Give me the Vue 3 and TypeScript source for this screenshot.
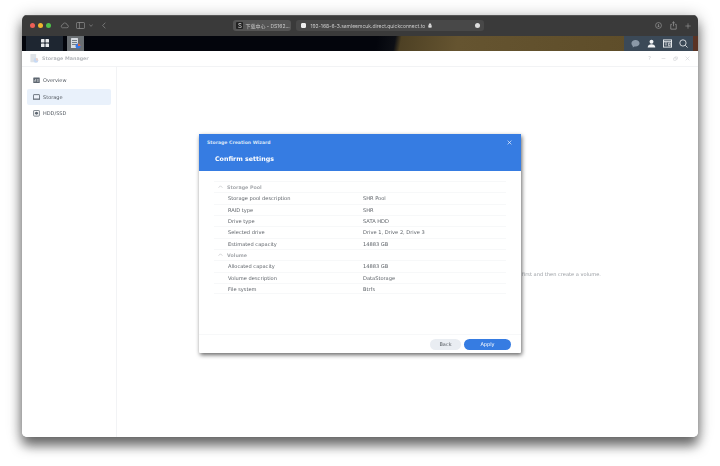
<script setup lang="ts">
const sideItems = [
  { label: 'Overview', active: false, kind: 'overview' },
  { label: 'Storage', active: true, kind: 'storage' },
  { label: 'HDD/SSD', active: false, kind: 'hdd' },
]
const sections = [
  {
    title: 'Storage Pool',
    rows: [
      ['Storage pool description', 'SHR Pool'],
      ['RAID type', 'SHR'],
      ['Drive type', 'SATA HDD'],
      ['Selected drive', 'Drive 1, Drive 2, Drive 3'],
      ['Estimated capacity', '14883 GB'],
    ],
  },
  {
    title: 'Volume',
    rows: [
      ['Allocated capacity', '14883 GB'],
      ['Volume description', 'DataStorage'],
      ['File system', 'Btrfs'],
    ],
  },
]
</script>

<template>
  <div class="page">
    <div class="window">
      <header class="toolbar">
        <div class="lights">
          <i class="light red"></i><i class="light yellow"></i><i class="light green"></i>
        </div>
        <svg class="tool cloud" viewBox="0 0 14 10"><path d="M3.5 8.5h7.2a2.2 2.2 0 0 0 .3-4.4A3.6 3.6 0 0 0 7.4 1a3.6 3.6 0 0 0-3.3 3A2.3 2.3 0 0 0 3.5 8.500z" /></svg>
        <svg class="tool sidebar" viewBox="0 0 12 9"><rect x=".5" y=".5" width="11" height="8" rx="1.5" /><path d="M4.500 .5v8" /></svg>
        <svg class="tool caret" viewBox="0 0 6 4"><path d="M.5 .8 3 3.200 5.500 .8" /></svg>
        <svg class="tool back" viewBox="0 0 6 10"><path d="M5 .8 1 5l4 4.200" /></svg>
        <div class="tabs">
          <div class="tab first">
            <span class="favicon">S</span>
            <span class="tab-text">下载中心 - DS162...</span>
          </div>
          <div class="tab second">
            <span class="favicon2"></span>
            <span class="tab-text">192-168-6-3.samleemcuk.direct.quickconnect.to</span>
            <svg class="lock" viewBox="0 0 6 7"><path d="M1.500 3V2a1.500 1.500 0 0 1 3 0v1" /><rect x=".7" y="3" width="4.600" height="3.500" rx=".6" /></svg>
            <span class="more"></span>
          </div>
        </div>
        <div class="right-tools">
          <svg class="tool dl" viewBox="0 0 10 10"><circle cx="5" cy="5" r="4.200" /><path d="M5 2.800v4M3.400 5.400 5 7l1.600-1.600" /></svg>
          <svg class="tool share" viewBox="0 0 9 11"><path d="M2.500 4H1v6.200h7V4H6.500M4.500 6.500V.8M2.800 2.400 4.500 .8l1.700 1.600" /></svg>
          <svg class="tool plus" viewBox="0 0 9 9"><path d="M4.500 .5v8M.5 4.500h8" /></svg>
        </div>
      </header>

      <nav class="taskbar">
        <div class="task-left">
          <span class="grid-btn">
            <svg viewBox="0 0 8 8"><rect x="0" y="0" width="3.500" height="3.500" rx=".6" /><rect x="4.500" y="0" width="3.500" height="3.500" rx=".6" /><rect x="0" y="4.500" width="3.500" height="3.500" rx=".6" /><rect x="4.500" y="4.500" width="3.500" height="3.500" rx=".6" /></svg>
          </span>
          <span class="app-btn">
            <svg viewBox="0 0 10 11"><rect x="0" y="0" width="7" height="10" rx=".6" fill="#d7dbe0" /><path d="M1 2.500h5M1 4.500h5M1 6.500h5" stroke="#59636e" stroke-width=".8" /><circle cx="7" cy="8" r="2.500" fill="#3578e5" /><path d="M7 8h2.500A2.500 2.500 0 0 0 7 5.500z" fill="#e0683a" /></svg>
          </span>
        </div>
        <div class="task-right">
          <svg viewBox="0 0 10 10" class="t-chat"><path d="M5 1c2.600 0 4.500 1.500 4.500 3.600S7.600 8.200 5 8.200H3.800L2 9.500V7.700C1 7 .5 5.800 .5 4.600.5 2.500 2.400 1 5 1z" /></svg>
          <svg viewBox="0 0 10 10" class="t-user"><circle cx="5" cy="3" r="2.200" /><path d="M.8 9.500c0-2.600 2-3.600 4.200-3.600s4.200 1 4.200 3.600z" /></svg>
          <svg viewBox="0 0 10 10" class="t-widget"><rect x=".5" y="1" width="9" height="8" fill="none" stroke="#f1f3f5" /><path d="M.5 3h9" stroke="#f1f3f5" stroke-width="1.200" /><path d="M2 4.500h2.500M6 4.500h2v3H6zM2 6.500h2.500" stroke="#f1f3f5" fill="none" stroke-width=".8" /></svg>
          <svg viewBox="0 0 10 10" class="t-search"><circle cx="4.400" cy="4.400" r="3.500" /><path d="m7 7 2.500 2.500" /></svg>
        </div>
      </nav>

      <section class="app">
        <div class="titlebar">
          <svg class="app-icon" viewBox="0 0 10 11"><rect x="0" y="0" width="7" height="10" rx=".6" fill="#dfe3e7" /><circle cx="6.800" cy="7.800" r="2.800" fill="#c6d9f4" /><path d="M6.800 7.800h2.800a2.800 2.800 0 0 0-2.800-2.800z" fill="#f1d5c8" /></svg>
          <span class="app-title">Storage Manager</span>
          <div class="win-btns">
            <span class="q">?</span>
            <svg viewBox="0 0 8 8"><path d="M1 4h6" /></svg>
            <svg viewBox="0 0 8 8"><rect x="1" y="3" width="4" height="4" rx=".5" /><path d="M3 3V1.500h4V5H5" /></svg>
            <svg viewBox="0 0 8 8"><path d="m1 1 6 6M7 1 1 7" /></svg>
          </div>
        </div>
        <div class="app-body">
          <aside class="side">
            <div v-for="item in sideItems" :key="item.label" class="side-item" :class="{ active: item.active }">
              <svg v-if="item.kind === 'overview'" class="side-icon" viewBox="0 0 8 7"><rect x=".3" y=".3" width="7.400" height="6.400" rx=".6" fill="#5d6670" /><path d="M1.500 5V3.500M3 5V2M4.500 3h2M4.500 4.500h2" stroke="#fff" stroke-width=".7" /></svg>
              <svg v-else-if="item.kind === 'storage'" class="side-icon" viewBox="0 0 8 7"><rect x=".5" y=".5" width="7" height="6" rx=".6" fill="#eef3fb" stroke="#5d6670" /><path d="M.5 5.500h7" stroke="#5d6670" /></svg>
              <svg v-else class="side-icon" viewBox="0 0 8 8"><rect x=".5" y=".5" width="7" height="7" rx=".8" fill="#fff" stroke="#5d6670" /><circle cx="4" cy="4" r="1.800" fill="#5d6670" /></svg>
              <span>{{ item.label }}</span>
            </div>
          </aside>
          <main class="content">
            <p class="hint">Please create a storage pool first and then create a volume.</p>
          </main>
        </div>

        <div class="dialog">
          <div class="dlg-head">
            <div class="dlg-top">
              <span class="dlg-name">Storage Creation Wizard</span>
              <svg class="dlg-close" viewBox="0 0 8 8"><path d="m1 1 6 6M7 1 1 7" /></svg>
            </div>
            <div class="dlg-title">Confirm settings</div>
          </div>
          <div class="dlg-body">
            <template v-for="section in sections" :key="section.title">
              <div class="row sec">
                <svg class="chev" viewBox="0 0 8 5"><path d="M1 4 4 1l3 3" /></svg>
                <span>{{ section.title }}</span>
              </div>
              <div v-for="r in section.rows" :key="r[0]" class="row">
                <span class="k">{{ r[0] }}</span>
                <span class="v">{{ r[1] }}</span>
              </div>
            </template>
          </div>
          <div class="dlg-foot">
            <button class="btn back-btn">Back</button>
            <button class="btn apply">Apply</button>
          </div>
        </div>
      </section>
    </div>
  </div>
</template>

<style>
html, body { margin: 0; background: #fff; }
</style>

<style scoped>
.page {
  width: 720px;
  height: 466px;
  box-sizing: border-box;
  padding: 14.5px 22px 29px;
  overflow: hidden;
  font-family: "DejaVu Sans", sans-serif;
  background: #fff;
}
.window {
  height: 100%;
  display: flex;
  flex-direction: column;
  border-radius: 5px;
  overflow: hidden;
  box-shadow: 0 9px 12px rgba(0, 0, 0, 0.5), 0 2px 16px rgba(0, 0, 0, 0.3);
  filter: blur(0.4px);
}
.toolbar {
  height: 21px;
  flex: none;
  background: #3a3a3a;
  display: flex;
  align-items: center;
  padding-left: 8px;
  box-sizing: border-box;
  border-top: 1px solid #555;
}
.lights { display: flex; gap: 3.200px; margin-right: 9px; }
.light { width: 5px; height: 5px; border-radius: 50%; display: block; }
.red { background: #ec5f56; }
.yellow { background: #f0b52e; }
.green { background: #4fc14a; }
.tool { fill: none; stroke: #a8a8a8; stroke-width: 0.8; flex: none; }
.cloud { width: 9px; height: 7px; margin-right: 7px; }
.sidebar { width: 9px; height: 7px; margin-right: 4px; }
.caret { width: 4px; height: 3px; margin-right: 9px; }
.back { width: 4px; height: 7px; }
.tabs { position: relative; flex: 1; display: flex; align-items: center; gap: 5px; margin-left: 127px; height: 100%; }
.tab { height: 11px; border-radius: 3px; display: flex; align-items: center; color: #c8c8c8; font-size: 5px; white-space: nowrap; font-family: "Inter", "Noto Sans CJK SC", sans-serif; }
.first { width: 58px; background: #545454; padding-left: 3px; box-sizing: border-box; }
.second { width: 188px; background: #484848; padding-left: 5px; box-sizing: border-box; }
.favicon { width: 7px; height: 7px; background: #222; color: #ddd; font-size: 6px; line-height: 7px; text-align: center; margin-right: 2px; border-radius: 1px; }
.favicon2 { width: 5px; height: 5px; background: #eee; border: 1px solid #eee; box-sizing: border-box; margin-right: 4px; border-radius: 1px; }
.lock { width: 4px; height: 5px; margin-left: 3px; fill: #ddd; stroke: #ddd; stroke-width: .5; }
.more { width: 5.500px; height: 5.500px; border-radius: 50%; background: #ddd; margin-left: auto; margin-right: 4px; }
.right-tools { display: flex; align-items: center; gap: 8px; margin-right: 7px; }
.dl { width: 7px; height: 7px; }
.share { width: 7px; height: 9px; }
.plus { width: 6px; height: 6px; }
.taskbar {
  height: 15px;
  flex: none;
  display: flex;
  justify-content: space-between;
  background: linear-gradient(100deg, #03050c 0, #03050c 350px, #0d0f15 368px, #4e4124 374px, #655430 430px, #5e4d29 602px, #4a3a20 676px);
}
.task-left { display: flex; padding-left: 4px; }
.grid-btn { width: 37px; height: 15px; background: #1e2631; display: flex; align-items: center; justify-content: center; }
.grid-btn svg { width: 8px; height: 8px; fill: #e8eaec; }
.app-btn { width: 17px; height: 15px; margin-left: 4px; background: #6a6f73; display: flex; align-items: center; justify-content: center; }
.app-btn svg { width: 10px; height: 11px; }
.task-right { width: 69px; margin-right: 5px; background: #3b4957; display: flex; align-items: center; box-sizing: border-box; padding-left: 6.500px; gap: 7px; box-shadow: 5px 0 0 #5a3324; }
.task-right svg { width: 9px; height: 9px; flex: none; }
.t-chat { fill: #8b98a6; }
.t-user { fill: #f1f3f5; }
.t-search { fill: none; stroke: #f1f3f5; stroke-width: 0.9; }
.app { flex: 1; position: relative; background: #fff; display: flex; flex-direction: column; min-height: 0; }
.titlebar { height: 15px; flex: none; display: flex; align-items: center; padding-left: 8px; border-bottom: 1px solid #f2f3f5; box-sizing: content-box; }
.app-icon { width: 9px; height: 9px; margin-right: 3px; }
.app-title { font-size: 4.800px; font-weight: 700; color: #b5b8bc; }
.win-btns { margin-left: auto; display: flex; align-items: center; gap: 7px; margin-right: 8px; }
.win-btns svg { width: 5px; height: 5px; fill: none; stroke: #c8cbce; stroke-width: .8; }
.q { font-size: 5px; color: #c8cbce; margin-right: 3px; }
.app-body { flex: 1; display: flex; min-height: 0; }
.side { width: 95px; flex: none; box-sizing: border-box; border-right: 1px solid #f2f3f5; padding: 5.500px 5px; }
.side-item { height: 16.500px; display: flex; align-items: center; gap: 3px; padding-left: 6px; font-size: 5px; color: #555b63; border-radius: 2px; }
.side-item.active { background: #e9f1fb; }
.side-icon { width: 7px; height: 6.500px; flex: none; }
.content { flex: 1; position: relative; }
.hint { position: absolute; margin: 0; right: 97px; top: 204.500px; font-size: 5.100px; color: #9a9ea3; white-space: nowrap; }
.dialog {
  position: absolute;
  left: 177px;
  top: 83.500px;
  width: 322px;
  height: 219px;
  background: #fff;
  display: flex;
  flex-direction: column;
  border-radius: 1px;
  box-shadow: 1px 2px 4px rgba(0, 0, 0, 0.6);
}
.dlg-head { height: 37px; flex: none; background: #367ce2; color: #fff; padding: 0 8px; box-sizing: border-box; }
.dlg-top { display: flex; justify-content: space-between; align-items: center; height: 15px; padding-top: 1px; box-sizing: border-box; }
.dlg-name { font-size: 4.600px; font-weight: 700; color: #d6e4f8; }
.dlg-close { width: 5px; height: 5px; fill: none; stroke: #fff; stroke-width: 1; margin-right: 1px; }
.dlg-title { font-size: 6.300px; font-weight: 700; padding-left: 8px; margin-top: 6px; }
.dlg-body { flex: 1; padding: 10px 15px 0; }
.row { height: 11.330px; box-sizing: border-box; display: flex; align-items: center; padding-left: 14px; font-size: 5.100px; color: #5e6369; border-top: 1px solid #f7f8f9; }
.sec { padding-left: 4px; color: #a6a9ad; font-weight: 700; font-size: 4.800px; gap: 3px; }
.row:last-child { border-bottom: 1px solid #f7f8f9; }
.chev { width: 5px; height: 3.500px; fill: none; stroke: #a6a9ad; stroke-width: .8; margin-right: 1px; }
.k { width: 135px; flex: none; }
.dlg-foot { height: 18px; flex: none; border-top: 1px solid #f7f8f9; display: flex; justify-content: flex-end; align-items: center; gap: 3px; padding-right: 10px; }
.btn { height: 11px; border: none; border-radius: 6px; font: inherit; font-size: 5px; padding: 0; }
.back-btn { width: 31px; background: #e9edf2; color: #5e6369; }
.apply { width: 47px; background: #367ce2; color: #fff; }
</style>
